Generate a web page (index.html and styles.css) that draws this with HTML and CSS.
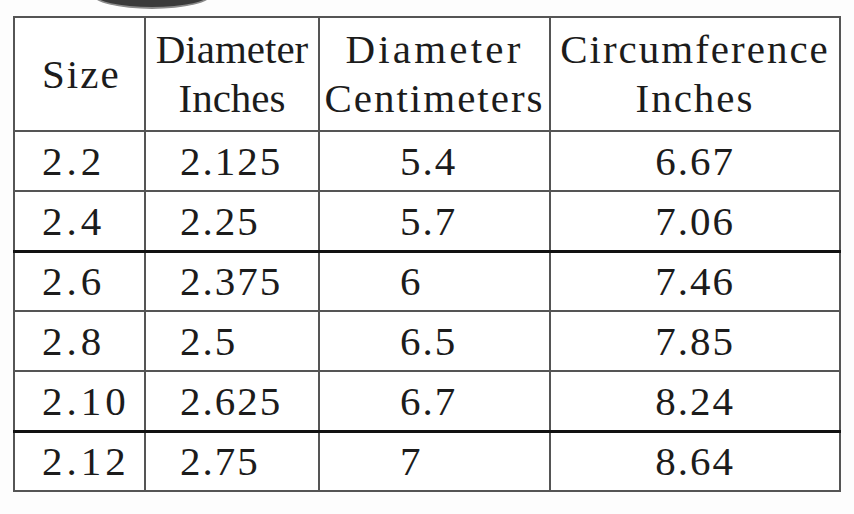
FILE: index.html
```html
<!DOCTYPE html>
<html lang="en">
<head>
    <meta charset="UTF-8">
    <title>Ring Size Chart</title>
    <link rel="stylesheet" href="styles.css">
</head>
<body>
    <div class="ring-top"></div>
    <table class="size-chart">
        <colgroup>
            <col class="c-size">
            <col class="c-dia-in">
            <col class="c-dia-cm">
            <col class="c-circ">
        </colgroup>
        <thead>
            <tr class="head-row">
                <th class="h-size">Size</th>
                <th class="h-tight">Diameter<br>Inches</th>
                <th><span class="wide">Diameter</span><br>Centimeters</th>
                <th>Circumference<br>Inches</th>
            </tr>
        </thead>
        <tbody>
            <tr><td class="size">2.2</td><td class="dia">2.125</td><td class="cm">5.4</td><td class="circ">6.67</td></tr>
            <tr class="sep"><td class="size">2.4</td><td class="dia">2.25</td><td class="cm">5.7</td><td class="circ">7.06</td></tr>
            <tr><td class="size">2.6</td><td class="dia">2.375</td><td class="cm">6</td><td class="circ">7.46</td></tr>
            <tr><td class="size">2.8</td><td class="dia">2.5</td><td class="cm">6.5</td><td class="circ">7.85</td></tr>
            <tr class="sep"><td class="size">2.10</td><td class="dia">2.625</td><td class="cm">6.7</td><td class="circ">8.24</td></tr>
            <tr><td class="size">2.12</td><td class="dia">2.75</td><td class="cm">7</td><td class="circ">8.64</td></tr>
        </tbody>
    </table>
</body>
</html>
```

FILE: styles.css
```css
body {
    margin: 0;
    padding: 16px 0 0 13px;
    background: #fdfdfd;
    font-family: "Liberation Serif", "Times New Roman", serif;
    color: #1c1c1c;
    position: relative;
    overflow: hidden;
}
/* bottom of the ring picture peeking over the chart */
.ring-top {
    position: absolute;
    left: 92px;
    top: -21px;
    width: 116px;
    height: 26px;
    border-radius: 50%;
    background: #3a3a3a;
    border: 2px solid #8a8a8a;
}
.size-chart {
    border-collapse: collapse;
    width: 826px;
    table-layout: fixed;
    font-size: 41px;
    letter-spacing: 2px;
    background: #fff;
}
.c-size { width: 131px; }
.c-dia-in { width: 174px; }
.c-dia-cm { width: 231px; }
.c-circ { width: 290px; }
.size-chart th,
.size-chart td {
    border: 2px solid #555;
    padding: 0;
    vertical-align: middle;
}
.size-chart th {
    font-weight: normal;
    line-height: 49px;
    text-align: center;
}
.head-row { height: 114px; }
.size-chart tbody tr { height: 60px; }
.h-size { text-align: left !important; padding-left: 27px !important; }
.h-tight { letter-spacing: 0; }
.wide { letter-spacing: 3.2px; }
.size-chart td { line-height: 56px; }
.size { padding-left: 27px !important; letter-spacing: 4px; }
.dia { padding-left: 34px !important; }
.cm { padding-left: 80px !important; }
.circ { text-align: center; }
.sep td { border-bottom: 3px solid #111; }
```
